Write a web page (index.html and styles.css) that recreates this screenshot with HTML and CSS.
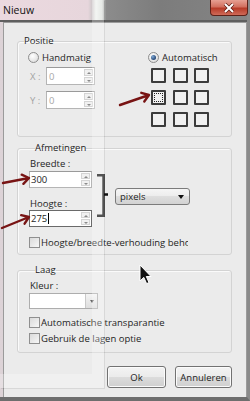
FILE: index.html
```html
<!DOCTYPE html>
<html>
<head>
<title>Nieuw</title>
<link rel="stylesheet" href="styles.css">
</head>
<body>
<div id="window">
  <div class="titlebar">
    <span class="title">Nieuw</span>
    <span class="close">
      <svg width="12" height="10" viewBox="0 0 12 10"><path d="M2 1 L10 9 M10 1 L2 9" stroke="#5a1a12" stroke-width="3.4"/><path d="M2 1 L10 9 M10 1 L2 9" stroke="#fff" stroke-width="2"/></svg>
    </span>
  </div>

  <div class="client">
    <fieldset class="group positie">
      <legend>Positie</legend>
      <div class="pos-body">
        <label class="radio"><span class="dot"></span>Handmatig</label>
        <label class="radio checked"><span class="dot"></span>Automatisch</label>
        <div class="coords">
          <div class="coord">
            <span class="clabel">X :</span>
            <span class="spin small">
              <span class="val grey">0</span>
              <span class="spin-btns"><i class="up"></i><i class="down"></i></span>
            </span>
          </div>
          <div class="coord">
            <span class="clabel">Y :</span>
            <span class="spin small">
              <span class="val grey">0</span>
              <span class="spin-btns"><i class="up"></i><i class="down"></i></span>
            </span>
          </div>
        </div>
        <div class="anchors">
          <span class="cell"></span><span class="cell"></span><span class="cell"></span>
          <span class="cell focus"></span><span class="cell"></span><span class="cell"></span>
          <span class="cell"></span><span class="cell"></span><span class="cell"></span>
        </div>
      </div>
    </fieldset>

    <fieldset class="group afmetingen">
      <legend>Afmetingen</legend>
      <div class="size-row">
        <div class="size-fields">
          <div class="flabel">Breedte :</div>
          <span class="spin wide">
            <span class="val">300</span>
            <span class="spin-btns"><i class="up"></i><i class="down"></i></span>
          </span>
          <div class="flabel second">Hoogte :</div>
          <span class="spin wide active">
            <span class="val">275<b class="caret"></b></span>
            <span class="spin-btns"><i class="up"></i><i class="down"></i></span>
          </span>
        </div>
        <svg class="bracket" width="12" height="43" viewBox="0 0 12 43">
          <path d="M0 1.2 H6.5 V41.8 H0 M6.5 20.5 H11" fill="none" stroke="#111" stroke-width="2.4"/>
        </svg>
        <div class="dropdown"><span>pixels</span><span class="tri"></span></div>
      </div>
      <div class="check clip"><span class="box"></span>Hoogte/breedte-verhouding behouden</div>
    </fieldset>

    <fieldset class="group laag">
      <legend>Laag</legend>
      <div class="flabel">Kleur :</div>
      <div class="combo"><span class="field"></span><span class="cbtn"><span class="tri small"></span></span></div>
      <div class="check first"><span class="box"></span>Automatische transparantie</div>
      <div class="check"><span class="box"></span>Gebruik de lagen optie</div>
    </fieldset>

    <div class="buttons">
      <button type="button" class="btn ok">Ok</button>
      <button type="button" class="btn cancel">Annuleren</button>
    </div>
  </div>
</div>

<!-- translucent window ghost over the left part -->
<div class="ghost"></div>

<!-- red hand-drawn arrows -->
<svg class="marks" width="250" height="401" viewBox="0 0 250 401">
  <g fill="none" stroke="#781414" stroke-width="2.4" stroke-linecap="round" stroke-linejoin="round">
    <path d="M120 105 L149 95 M141.3 92.8 L149 95 L144.3 101.5"/>
    <path d="M3 183 L29 178 M21.7 174.7 L29 178 L23.4 183.8"/>
    <path d="M2 228 L29 217 M21.2 215.2 L29 217 L24.6 223.7"/>
  </g>
</svg>

<svg class="pointer" width="13" height="21" viewBox="0 0 13 21">
  <path d="M1 1 L1 17 L4.8 13.4 L7.6 19.6 L10 18.6 L7.3 12.5 L12 12.5 Z" fill="#111" stroke="#fff" stroke-width="1"/>
</svg>
</body>
</html>
```

FILE: styles.css
```css
* {
  box-sizing: border-box;
}
html, body {
  margin: 0;
  padding: 0;
}
body {
  width: 250px;
  height: 401px;
  overflow: hidden;
  position: relative;
  font-family: "Open Sans", "Noto Sans", sans-serif;
  font-size: 9.5px;
  color: #1e1e1e;
  background: linear-gradient(to right, #ddd3d7 0, #d6d0d2 60px, #9a9a9a 110px, #8c8c8c 250px);
}
#window {
  width: 250px;
  height: 401px;
  display: flex;
  flex-direction: column;
  border-bottom: 4px solid #6e6e6e;
  border-right: 3px solid #8a8a8a;
}

/* title bar */
.titlebar {
  height: 22px;
  display: flex;
  align-items: flex-start;
  justify-content: space-between;
  background: linear-gradient(to right, #ebd9df 0, #e7d6dc 88px, #cfc9cb 92px, #eef2ee 96px, #dde1dd 102px, #8c8c8c 106px, #7c7c7c 160px, #858585 250px);
  border-bottom: 2px solid #5f5f5f;
}
.title {
  padding: 3px 0 0 3px;
  font-size: 10.5px;
  color: #111;
}
.close {
  width: 38px;
  height: 16px;
  margin-right: -1px;
  display: flex;
  align-items: center;
  justify-content: center;
  border: 1px solid #5e2118;
  border-top: none;
  border-radius: 0 0 4px 4px;
  background: linear-gradient(#e6a093 0, #d2705f 45%, #b73b28 55%, #cf6a58 100%);
}

/* client area */
.client {
  height: 375px;
  margin-left: 3px;
  border: 1px solid #9b9b9b;
  border-bottom: none;
  background: #ebebeb;
  padding: 11px 14px 0 13px;
}
.group {
  margin: 0;
  padding: 0;
  border: 1px solid #d3d3d3;
  border-radius: 3px;
  box-shadow: inset 1px 1px 0 #fafafa;
}
.group legend {
  padding: 0;
  margin-left: 6px;
  line-height: 14px;
  height: 14px;
}

/* Positie */
.positie {
  height: 103px;
}
.pos-body {
  display: grid;
  grid-template-columns: 120px 1fr;
  padding: 2px 0 0 10px;
}
.radio {
  display: flex;
  align-items: center;
  height: 14px;
}
.dot {
  width: 11px;
  height: 11px;
  border-radius: 50%;
  border: 1px solid #8d8d8d;
  background: radial-gradient(circle at 40% 35%, #ffffff 0, #e2e2e2 70%);
  margin-right: 3px;
  position: relative;
}
.checked .dot::after {
  content: "";
  position: absolute;
  left: 2px;
  top: 2px;
  width: 5px;
  height: 5px;
  border-radius: 50%;
  background: radial-gradient(circle at 35% 35%, #7fa9d6 0, #1f3f6e 75%);
}
.coords {
  padding: 3px 0 0 2px;
}
.coord {
  display: flex;
  align-items: center;
  height: 18px;
  margin-bottom: 6px;
}
.clabel {
  width: 16px;
  color: #a3a3a3;
}
.spin {
  display: flex;
  align-items: stretch;
  background: #fff;
  border: 1px solid #b5b5b5;
  border-top-color: #9a9a9a;
}
.spin.small {
  width: 49px;
  height: 18px;
}
.spin.wide {
  width: 63px;
  height: 17px;
}
.spin.active {
  border-color: #6a6a6a;
}
.val {
  flex: 1;
  padding-left: 1px;
  line-height: 15px;
  display: flex;
  align-items: center;
}
.grey {
  color: #a8a8a8;
  padding-left: 2px;
}
.caret {
  display: inline-block;
  width: 1px;
  height: 11px;
  background: #000;
  margin-left: 1px;
}
.spin-btns {
  width: 10px;
  display: flex;
  flex-direction: column;
  gap: 1px;
  padding: 1px 1px 1px 0;
}
.spin-btns i {
  flex: 1;
  border: 1px solid #d4d4d4;
  background: #f1f1f1;
  position: relative;
}
.spin-btns i::after {
  content: "";
  position: absolute;
  left: 2px;
  top: 2px;
  border-left: 2px solid transparent;
  border-right: 2px solid transparent;
}
.spin-btns .up::after {
  border-bottom: 2px solid #8a8a8a;
}
.spin-btns .down::after {
  border-top: 2px solid #8a8a8a;
}
.anchors {
  display: grid;
  grid-template-columns: repeat(3, 15px);
  grid-auto-rows: 15px;
  gap: 7px 6.5px;
  padding: 4px 0 0 3px;
}
.cell {
  border: 2px solid #3c3c3c;
  background: #f1f1f1;
  border-radius: 1px;
}
.cell.focus {
  outline: 1px dotted #222;
  outline-offset: -4px;
}

/* Afmetingen */
.afmetingen {
  margin-top: 4px;
  height: 114px;
  padding: 0 0 0 11px;
}
.size-row {
  display: flex;
  align-items: flex-start;
}
.flabel {
  line-height: 12px;
  margin: 3px 0 1px 1px;
}
.flabel.second {
  margin-top: 10px;
  margin-bottom: 0;
}
.size-fields {
  display: flex;
  flex-direction: column;
}
.bracket {
  margin: 19px 0 0 5px;
}
.dropdown {
  margin: 33px 0 0 6px;
  width: 75px;
  height: 17px;
  display: flex;
  align-items: center;
  justify-content: space-between;
  padding: 0 5px 0 4px;
  border: 1px solid #7b7b7b;
  border-radius: 3px;
  background: linear-gradient(#f5f5f5 0, #ececec 50%, #dedede 50%, #d2d2d2 100%);
}
.tri {
  border-left: 3.5px solid transparent;
  border-right: 3.5px solid transparent;
  border-top: 4px solid #111;
}
.tri.small {
  border-left-width: 2.5px;
  border-right-width: 2.5px;
  border-top: 3px solid #666;
}
.check {
  display: flex;
  align-items: center;
  height: 12px;
  white-space: nowrap;
  overflow: hidden;
}
.check .box {
  flex: none;
  width: 11px;
  height: 11px;
  margin-right: 1px;
  border: 1px solid #8f8f8f;
  background: linear-gradient(135deg, #dadada 0, #f7f7f7 100%);
}
.afmetingen .check {
  margin-top: 9px;
  width: 159px;
}

/* Laag */
.laag {
  margin-top: 8px;
  height: 90px;
  padding: 0 0 0 11px;
}
.laag .flabel {
  margin: 3px 0 1px 1px;
}
.combo {
  width: 69px;
  height: 16px;
  display: flex;
  border: 1px solid #adadad;
  background: #fff;
}
.combo .field {
  flex: 1;
}
.combo .cbtn {
  width: 12px;
  display: flex;
  align-items: center;
  justify-content: center;
  border-left: 1px solid #c9c9c9;
  background: linear-gradient(#f4f4f4, #dedede);
}
.check.first {
  margin-top: 7px;
}
.laag .check + .check {
  margin-top: 4px;
}

/* buttons */
.buttons {
  display: flex;
  justify-content: flex-end;
  gap: 9px;
  margin-top: 13px;
}
.btn {
  height: 22px;
  padding: 0;
  font: inherit;
  color: #1e1e1e;
  border: 1px solid #727272;
  border-radius: 3px;
  background: linear-gradient(#f3f3f3 0, #ebebeb 50%, #dcdcdc 50%, #cfcfcf 100%);
  box-shadow: inset 0 0 0 1px #fbfbfb;
}
.btn.ok {
  width: 59px;
}
.btn.cancel {
  width: 57px;
}

/* overlays */
.ghost {
  position: absolute;
  left: 0;
  top: 0;
  width: 104px;
  height: 388px;
  border-right: 12px solid rgba(255, 255, 255, 0.28);
  border-bottom: 14px solid rgba(255, 255, 255, 0.28);
  box-shadow: 1px 1px 0 rgba(0, 0, 0, 0.08);
  pointer-events: none;
}
.marks {
  position: absolute;
  left: 0;
  top: 0;
  pointer-events: none;
}
.pointer {
  position: absolute;
  left: 139px;
  top: 264px;
}
```
